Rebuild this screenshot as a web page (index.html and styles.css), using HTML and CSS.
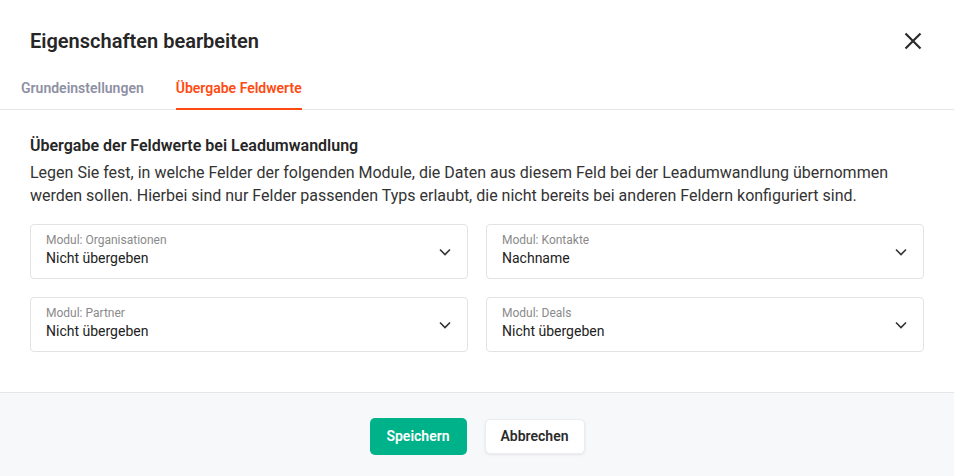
FILE: index.html
```html
<!DOCTYPE html>
<html lang="de">
<head>
<meta charset="utf-8">
<title>Eigenschaften bearbeiten</title>
<link rel="stylesheet" href="styles.css">
</head>
<body>
<div class="dialog">
  <header class="header">
    <div class="title-row">
      <h1 class="title">Eigenschaften bearbeiten</h1>
      <button class="close" aria-label="Schließen">
        <svg width="18" height="18" viewBox="0 0 18 18"><path d="M1.5 1.5 L16.5 16.5 M16.5 1.5 L1.5 16.5" stroke="#2b2b2b" stroke-width="2.2" fill="none"/></svg>
      </button>
    </div>
    <nav class="tabs">
      <a class="tab">Grundeinstellungen</a>
      <a class="tab active">Übergabe Feldwerte</a>
    </nav>
  </header>
  <main class="body">
    <h2 class="heading">Übergabe der Feldwerte bei Leadumwandlung</h2>
    <p class="desc">Legen Sie fest, in welche Felder der folgenden Module, die Daten aus diesem Feld bei der Leadumwandlung übernommen werden sollen. Hierbei sind nur Felder passenden Typs erlaubt, die nicht bereits bei anderen Feldern konfiguriert sind.</p>
    <div class="grid">
      <div class="select">
        <div class="select-text"><span class="label">Modul: Organisationen</span><span class="value">Nicht übergeben</span></div>
        <svg class="chev" width="12" height="8" viewBox="0 0 12 8"><path d="M1 1.5 L6 6.5 L11 1.5" stroke="#333" stroke-width="1.6" fill="none"/></svg>
      </div>
      <div class="select">
        <div class="select-text"><span class="label">Modul: Kontakte</span><span class="value">Nachname</span></div>
        <svg class="chev" width="12" height="8" viewBox="0 0 12 8"><path d="M1 1.5 L6 6.5 L11 1.5" stroke="#333" stroke-width="1.6" fill="none"/></svg>
      </div>
      <div class="select">
        <div class="select-text"><span class="label">Modul: Partner</span><span class="value">Nicht übergeben</span></div>
        <svg class="chev" width="12" height="8" viewBox="0 0 12 8"><path d="M1 1.5 L6 6.5 L11 1.5" stroke="#333" stroke-width="1.6" fill="none"/></svg>
      </div>
      <div class="select">
        <div class="select-text"><span class="label">Modul: Deals</span><span class="value">Nicht übergeben</span></div>
        <svg class="chev" width="12" height="8" viewBox="0 0 12 8"><path d="M1 1.5 L6 6.5 L11 1.5" stroke="#333" stroke-width="1.6" fill="none"/></svg>
      </div>
    </div>
  </main>
  <footer class="footer">
    <button class="btn btn-primary">Speichern</button>
    <button class="btn btn-secondary">Abbrechen</button>
  </footer>
</div>
</body>
</html>
```

FILE: styles.css
```css
* { box-sizing: border-box; }
html, body { margin: 0; padding: 0; background: #fff; }
body {
  font-family: Roboto, "Noto Sans", "Liberation Sans", sans-serif;
  color: #2b2b2b;
  width: 954px;
  height: 476px;
  overflow: hidden;
}
.dialog { display: flex; flex-direction: column; height: 476px; }
.header { border-bottom: 1px solid #e6e6e9; }
.title-row {
  display: flex;
  align-items: center;
  justify-content: space-between;
  padding: 29px 32px 0 30px;
}
.title {
  margin: 0;
  font-size: 20px;
  line-height: 24px;
  font-weight: 600;
  color: #262626;
}
.close {
  border: 0;
  background: none;
  padding: 0;
  width: 18px;
  height: 18px;
  display: flex;
  cursor: pointer;
}
.tabs {
  display: flex;
  gap: 32px;
  padding: 0 21px;
  margin-top: 25px;
}
.tab {
  font-size: 14px;
  line-height: 20px;
  font-weight: 600;
  color: #8e90a3;
  padding-bottom: 10px;
  border-bottom: 2px solid transparent;
  margin-bottom: -1px;
}
.tab.active { color: #ff4a12; border-bottom-color: #ff4a12; }
.body { padding: 25px 30px 40px; }
.heading {
  margin: 0;
  font-size: 16px;
  line-height: 22px;
  font-weight: 600;
  color: #262626;
}
.desc {
  margin: 4px 0 0;
  font-size: 16px;
  line-height: 23px;
  color: #333;
}
.grid {
  display: grid;
  grid-template-columns: 1fr 1fr;
  gap: 18px;
  margin-top: 17px;
}
.select {
  height: 55px;
  border: 1px solid #e3e3e6;
  border-radius: 4px;
  display: flex;
  align-items: center;
  justify-content: space-between;
  padding: 0 16px 0 15px;
}
.select-text { display: flex; flex-direction: column; }
.label { font-size: 12px; line-height: 16px; color: #8a8a8a; margin-top: -3px; }
.value { font-size: 14px; line-height: 20px; color: #222; margin-top: 0; }
.chev { margin-top: 1px; }
.footer {
  flex: 1;
  background: #f7f8fa;
  border-top: 1px solid #e6e6e9;
  display: flex;
  justify-content: center;
  align-items: center;
  gap: 18px;
  padding-top: 3px;
}
.btn {
  font-family: inherit;
  font-size: 14px;
  font-weight: 600;
  border-radius: 5px;
  cursor: pointer;
}
.btn-primary {
  background: #00b28a;
  color: #fff;
  border: 0;
  height: 37px;
  width: 97px;
}
.btn-secondary {
  background: #fff;
  color: #2b2b2b;
  border: 1px solid #ececef;
  height: 35px;
  width: 100px;
  box-shadow: 0 1px 3px rgba(0,0,0,0.08);
}
```
